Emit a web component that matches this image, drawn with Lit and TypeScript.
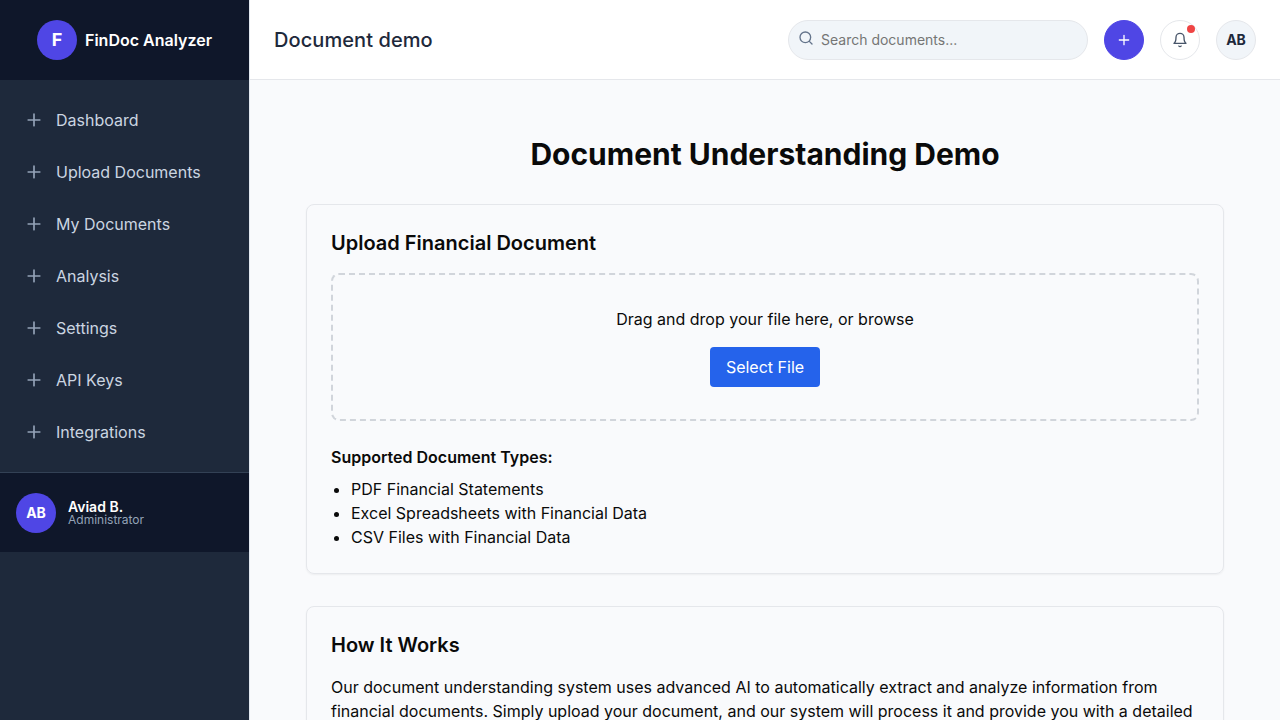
import { LitElement, html, css, svg } from "lit";
import { customElement } from "lit/decorators.js";

const plusPath = "M12 5v14M5 12h14";
const searchPath = "M19 11a8 8 0 1 1-16 0a8 8 0 0 1 16 0zM21 21l-4.35-4.35";
const bellPath =
  "M18 8A6 6 0 0 0 6 8c0 7-3 9-3 9h18s-3-2-3-9M13.73 21a2 2 0 0 1-3.46 0";

const icon = (d: string, size: number) => html`<svg
  width=${size}
  height=${size}
  viewBox="0 0 24 24"
  fill="none"
  stroke="currentColor"
  stroke-width="2"
  stroke-linecap="round"
  stroke-linejoin="round"
>${svg`<path d=${d}></path>`}</svg>`;

const shared = css`
  * {
    box-sizing: border-box;
    margin: 0;
    padding: 0;
  }
  svg {
    display: block;
    flex: none;
  }
  button,
  input {
    font: inherit;
  }
`;

@customElement("app-sidebar")
class AppSidebar extends LitElement {
  static styles = [
    shared,
    css`
      :host {
        display: block;
        width: 250px;
        flex: none;
        background: #1e293b;
        border-right: 1px solid #e2e8f0;
      }
      .brand {
        height: 80px;
        display: flex;
        align-items: center;
        justify-content: center;
        gap: 8px;
        background: #0f172a;
        color: #fff;
        font-weight: 600;
      }
      .circle {
        width: 40px;
        height: 40px;
        border-radius: 50%;
        display: flex;
        align-items: center;
        justify-content: center;
        background: #4f46e5;
        color: #fff;
        font-weight: 700;
        font-size: 14px;
      }
      .logo {
        font-size: 18px;
        font-weight: 700;
      }
      nav {
        display: flex;
        flex-direction: column;
        gap: 4px;
        padding: 16px 8px;
      }
      .item {
        height: 48px;
        display: flex;
        align-items: center;
        gap: 12px;
        padding: 0 16px;
        color: #cbd5e1;
      }
      .item svg {
        color: #94a3b8;
      }
      .user {
        height: 80px;
        display: flex;
        align-items: center;
        gap: 12px;
        padding: 0 16px;
        background: #0f172a;
        border-top: 1px solid #334155;
      }
      .name {
        font-size: 14px;
        line-height: 14px;
        font-weight: 600;
        color: #fff;
      }
      .role {
        font-size: 12px;
        line-height: 12px;
        color: #94a3b8;
      }
    `,
  ];

  render() {
    const items = [
      "Dashboard",
      "Upload Documents",
      "My Documents",
      "Analysis",
      "Settings",
      "API Keys",
      "Integrations",
    ];
    return html`
      <div class="brand"><div class="circle logo">F</div><span>FinDoc Analyzer</span></div>
      <nav>
        ${items.map((t) => html`<a class="item">${icon(plusPath, 20)}<span>${t}</span></a>`)}
      </nav>
      <div class="user">
        <div class="circle">AB</div>
        <div>
          <div class="name">Aviad B.</div>
          <div class="role">Administrator</div>
        </div>
      </div>
    `;
  }
}

@customElement("app-header")
class AppHeader extends LitElement {
  static styles = [
    shared,
    css`
      :host {
        display: block;
        flex: none;
      }
      header {
        height: 80px;
        display: flex;
        align-items: center;
        gap: 16px;
        padding: 0 24px;
        background: #fff;
        border-bottom: 1px solid #e5e7eb;
      }
      h1 {
        flex: 1;
        font-size: 20px;
        font-weight: 500;
        line-height: 28px;
        letter-spacing: 0.08px;
        color: #1e293b;
      }
      .search {
        width: 300px;
        height: 40px;
        display: flex;
        align-items: center;
        gap: 7px;
        padding: 0 9px;
        background: #f1f5f9;
        border: 1px solid #e5e7eb;
        border-radius: 20px;
      }
      .search svg {
        color: #64748b;
        margin-bottom: 4px;
      }
      .search input {
        flex: 1;
        min-width: 0;
        border: 0;
        outline: 0;
        background: none;
        font-size: 14px;
      }
      .search input::placeholder {
        color: #757575;
      }
      .round {
        position: relative;
        width: 40px;
        height: 40px;
        border-radius: 50%;
        display: flex;
        align-items: center;
        justify-content: center;
        border: 1px solid #e5e7eb;
        background: #fff;
        color: #475569;
      }
      .add {
        background: #4f46e5;
        border-color: #4f46e5;
        color: #fff;
      }
      .avatar {
        background: #f1f5f9;
        color: #1e293b;
        font-size: 14px;
        font-weight: 700;
      }
      .dot {
        position: absolute;
        top: 4px;
        right: 4px;
        width: 8px;
        height: 8px;
        border-radius: 50%;
        background: #ef4444;
      }
    `,
  ];

  render() {
    return html`
      <header>
        <h1>Document demo</h1>
        <div class="search">
          ${icon(searchPath, 16)}
          <input type="text" placeholder="Search documents..." />
        </div>
        <button class="round add">${icon(plusPath, 16)}</button>
        <button class="round">${icon(bellPath, 16)}<span class="dot"></span></button>
        <div class="round avatar">AB</div>
      </header>
    `;
  }
}

@customElement("app-root")
class AppRoot extends LitElement {
  static styles = [
    shared,
    css`
      :host {
        display: flex;
        height: 100vh;
        overflow: hidden;
        font-family: Inter, sans-serif;
        font-size: 16px;
        line-height: 24px;
        color: #0a0a0a;
        background: #f9fafc;
      }
      .page {
        flex: 1;
        min-width: 0;
        display: flex;
        flex-direction: column;
      }
      main {
        flex: 1;
        min-height: 0;
        overflow: hidden;
        padding: 56px 56px 0;
      }
      h1 {
        font-size: 30px;
        line-height: 36px;
        font-weight: 700;
        text-align: center;
        margin-bottom: 32px;
      }
      .card {
        border: 1px solid #e5e7eb;
        border-radius: 8px;
        padding: 24px;
        margin-bottom: 32px;
        box-shadow: 0 1px 2px rgba(0, 0, 0, 0.05);
      }
      h2 {
        font-size: 20px;
        line-height: 28px;
        font-weight: 600;
        margin-bottom: 16px;
      }
      .drop {
        border: 2px dashed #d1d5db;
        border-radius: 8px;
        padding: 32px;
        display: flex;
        flex-direction: column;
        align-items: center;
        gap: 16px;
        margin-bottom: 24px;
      }
      .select {
        height: 40px;
        padding: 0 16px;
        border: 0;
        border-radius: 4px;
        background: #2563eb;
        color: #fff;
      }
      h3 {
        font-size: 16px;
        font-weight: 600;
        margin-bottom: 8px;
      }
      ul {
        padding-left: 20px;
        list-style: disc;
      }
    `,
  ];

  render() {
    return html`
      <app-sidebar></app-sidebar>
      <div class="page">
        <app-header></app-header>
        <main>
          <h1>Document Understanding Demo</h1>
          <section class="card">
            <h2>Upload Financial Document</h2>
            <div class="drop">
              <p>Drag and drop your file here, or browse</p>
              <button class="select">Select File</button>
            </div>
            <h3>Supported Document Types:</h3>
            <ul>
              <li>PDF Financial Statements</li>
              <li>Excel Spreadsheets with Financial Data</li>
              <li>CSV Files with Financial Data</li>
            </ul>
          </section>
          <section class="card">
            <h2>How It Works</h2>
            <p>
              Our document understanding system uses advanced AI to automatically extract and
              analyze information from financial documents. Simply upload your document, and our
              system will process it and provide you with a detailed
            </p>
          </section>
        </main>
      </div>
    `;
  }
}
